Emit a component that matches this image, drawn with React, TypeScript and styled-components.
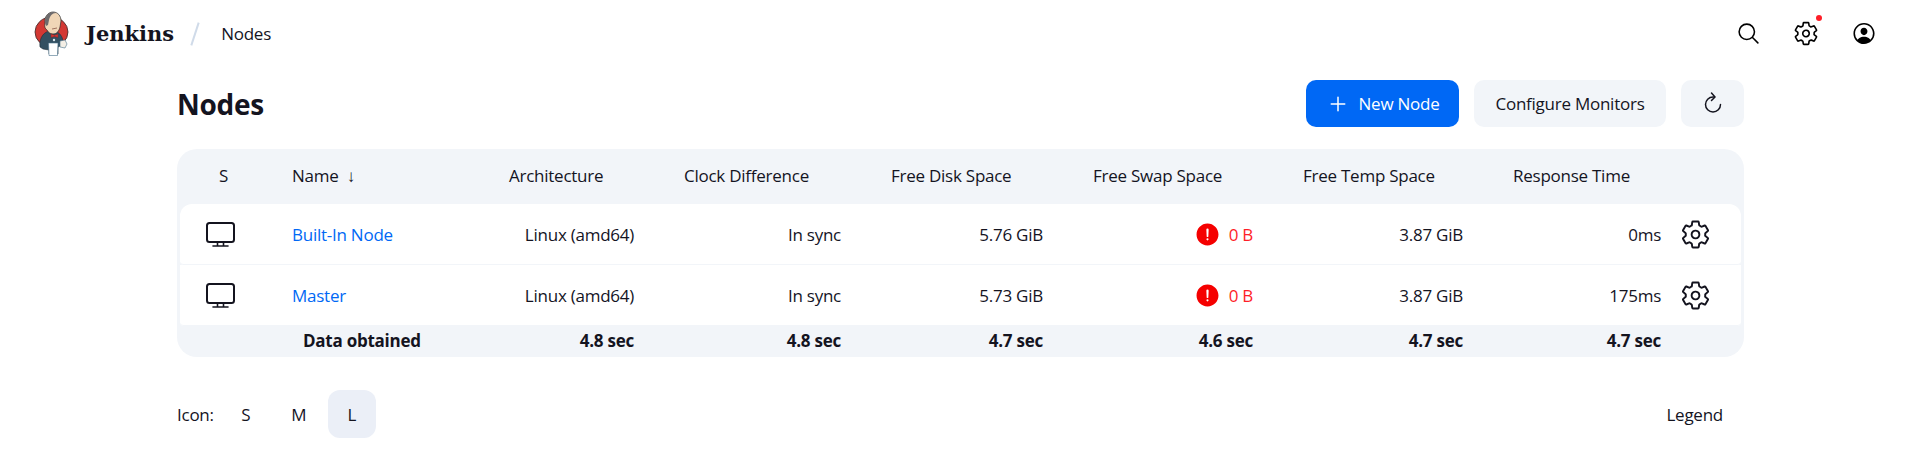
import React from 'react';
import styled, { createGlobalStyle } from 'styled-components';
import {
  IoAdd,
  IoAlertCircle,
  IoPersonCircleOutline,
  IoSearchOutline,
  IoSettingsOutline,
} from 'react-icons/io5';

const GlobalStyle = createGlobalStyle`
  html, body {
    margin: 0;
    padding: 0;
    background: #fff;
    color: #14141f;
    font-family: "Open Sans", "Noto Sans", sans-serif;
    font-size: 17px;
    letter-spacing: -0.25px;
  }
`;

const nodes = [
  { name: 'Built-In Node', arch: 'Linux (amd64)', clock: 'In sync', disk: '5.76 GiB', swap: '0 B', temp: '3.87 GiB', time: '0ms' },
  { name: 'Master', arch: 'Linux (amd64)', clock: 'In sync', disk: '5.73 GiB', swap: '0 B', temp: '3.87 GiB', time: '175ms' },
];

const columns = [87, 217, 175, 207, 202, 210, 210, 193, 60];

const JenkinsLogo = () => (
  <svg width="44" height="50" viewBox="0 0 44 50">
    <ellipse cx="21.5" cy="24" rx="16.5" ry="15" fill="#d33833" stroke="#3a2a2a" strokeWidth="0.8" />
    <path d="M10 39c-1-7 2-14 9-16l8 1c4 2 6 6 6 11l-3 3-2 1 0 7-9 0 0-4-6-1z" fill="#335061" stroke="#1d2c36" strokeWidth="0.6" />
    <path d="M15 15c-1-6 3-11 8-11 5 0 8 4 8 9l-1 6c-1 4-3 7-7 7-3 0-5-2-6-4-2-1-3-4-2-7z" fill="#f0d6b7" stroke="#2a2a2a" strokeWidth="0.7" />
    <path d="M15 15c-1-6 3-11 8-11 1 0 2 0 3 1-4 0-6 3-7 7l-1 5-2 1z" fill="#6d6b6d" />
    <path d="M22 21l5-1" stroke="#8a5a4a" strokeWidth="0.8" fill="none" />
    <path d="M21 26l3.5 1.2L28 26l0 3.4-3.5-1-3.5 1z" fill="#d33833" stroke="#7a1a18" strokeWidth="0.4" />
    <path d="M18.5 35h9.5l-.5 12.5h-8.5z" fill="#fff" stroke="#49728b" strokeWidth="0.6" />
    <path d="M30 33l5-1 2 4-2 4-5-1z" fill="#f4efe6" stroke="#49728b" strokeWidth="0.6" />
    <circle cx="24" cy="32" r="1.2" fill="#d9e5ec" />
  </svg>
);

const ComputerIcon = () => (
  <svg width="29" height="25" viewBox="0 0 29 25" fill="none" stroke="#14141f" strokeLinecap="round" strokeLinejoin="round">
    <rect x="1" y="1" width="27" height="19" rx="2.5" strokeWidth="2" />
    <path d="M7 24h15M11.5 20.5v3.5M17.5 20.5v3.5" strokeWidth="1.6" />
  </svg>
);

const RefreshIcon = () => (
  <svg width="20" height="22" viewBox="0 0 20 22" fill="none" stroke="#14141f" strokeWidth="1.5" strokeLinecap="round" strokeLinejoin="round">
    <path d="M17.5 13.5a7.5 7.5 0 1 1-7.5-7.5h1.5" />
    <path d="M8.5 2l3.5 4-3.5 3.5" />
  </svg>
);

export default function App() {
  return (
    <>
      <GlobalStyle />
      <Header>
        <Brand>
          <JenkinsLogo />
          <BrandName>Jenkins</BrandName>
          <Slash />
          <Crumb>Nodes</Crumb>
        </Brand>
        <HeaderActions>
          <HeaderIcon><IoSearchOutline size={25} /></HeaderIcon>
          <HeaderIcon>
            <IoSettingsOutline size={27} />
            <Dot />
          </HeaderIcon>
          <HeaderIcon><IoPersonCircleOutline size={31} /></HeaderIcon>
        </HeaderActions>
      </Header>
      <Main>
        <TitleRow>
          <Title>Nodes</Title>
          <Buttons>
            <Button $primary>
              <IoAdd size={24} />
              New Node
            </Button>
            <Button>Configure Monitors</Button>
            <Button $square><RefreshIcon /></Button>
          </Buttons>
        </TitleRow>
        <TableWrap>
          <Table>
            <colgroup>
              {columns.map((w, i) => (
                <col key={i} style={{ width: w }} />
              ))}
            </colgroup>
            <thead>
              <tr>
                <HeadCell $center>S</HeadCell>
                <HeadCell>Name&nbsp; ↓</HeadCell>
                <HeadCell>Architecture</HeadCell>
                <HeadCell>Clock Difference</HeadCell>
                <HeadCell>Free Disk Space</HeadCell>
                <HeadCell>Free Swap Space</HeadCell>
                <HeadCell>Free Temp Space</HeadCell>
                <HeadCell>Response Time</HeadCell>
                <HeadCell />
              </tr>
            </thead>
            <tbody>
              {nodes.map((n) => (
                <Row key={n.name}>
                  <IconCell><ComputerIcon /></IconCell>
                  <NameCell><NodeLink href="#">{n.name}</NodeLink></NameCell>
                  <ValueCell>{n.arch}</ValueCell>
                  <ValueCell>{n.clock}</ValueCell>
                  <ValueCell>{n.disk}</ValueCell>
                  <ValueCell $danger>
                    <SwapValue>
                      <IoAlertCircle size={27} />
                      {n.swap}
                    </SwapValue>
                  </ValueCell>
                  <ValueCell>{n.temp}</ValueCell>
                  <LastValueCell>{n.time}</LastValueCell>
                  <GearCell><IoSettingsOutline size={31} /></GearCell>
                </Row>
              ))}
            </tbody>
            <tfoot>
              <tr>
                <FootCell />
                <FootLabel>Data obtained</FootLabel>
                <FootCell>4.8 sec</FootCell>
                <FootCell>4.8 sec</FootCell>
                <FootCell>4.7 sec</FootCell>
                <FootCell>4.6 sec</FootCell>
                <FootCell>4.7 sec</FootCell>
                <FootCell $last>4.7 sec</FootCell>
                <FootCell />
              </tr>
            </tfoot>
          </Table>
        </TableWrap>
        <BottomRow>
          <IconSizes>
            <SizeLabel>Icon:</SizeLabel>
            <SizeOption>S</SizeOption>
            <SizeOption>M</SizeOption>
            <SizeOption $active>L</SizeOption>
          </IconSizes>
          <Legend>Legend</Legend>
        </BottomRow>
      </Main>
    </>
  );
}

const Header = styled.header`
  display: flex;
  align-items: center;
  justify-content: space-between;
  height: 66px;
  padding: 0 42px 0 30px;
`;

const Brand = styled.div`
  display: flex;
  align-items: center;
`;

const BrandName = styled.span`
  margin-left: 12px;
  font-family: "DejaVu Serif", serif;
  font-weight: 700;
  font-size: 21px;
  letter-spacing: 0;
  color: #14141f;
`;

const Slash = styled.span`
  width: 2px;
  height: 24px;
  margin: 2px 25px 0 20px;
  background: #d0dbe9;
  transform: rotate(18deg);
`;

const Crumb = styled.span`
  font-size: 17px;
`;

const HeaderActions = styled.div`
  display: flex;
  align-items: center;
  gap: 32px;
`;

const HeaderIcon = styled.span`
  position: relative;
  display: flex;
  align-items: center;
  justify-content: center;
  width: 26px;
  height: 26px;
  color: #000;
`;

const Dot = styled.span`
  position: absolute;
  top: -5px;
  right: -3px;
  width: 6px;
  height: 6px;
  border-radius: 50%;
  background: #fe1e28;
`;

const Main = styled.main`
  width: 1567px;
  margin-left: 177px;
`;

const TitleRow = styled.div`
  display: flex;
  align-items: center;
  justify-content: space-between;
  height: 47px;
  margin-top: 14px;
`;

const Title = styled.h1`
  margin: 0;
  font-size: 28px;
  font-weight: 700;
  letter-spacing: -0.3px;
`;

const Buttons = styled.div`
  display: flex;
  gap: 15px;
`;

const Button = styled.button<{ $primary?: boolean; $square?: boolean }>`
  display: flex;
  align-items: center;
  justify-content: center;
  gap: 9px;
  height: 47px;
  width: ${(p) => (p.$primary ? '153px' : p.$square ? '63px' : '192px')};
  padding: 0 0 ${(p) => (p.$square ? '4px' : '0')} 0;
  border: 0;
  border-radius: 10px;
  font: inherit;
  font-weight: ${(p) => (p.$primary ? 500 : 400)};
  letter-spacing: inherit;
  color: ${(p) => (p.$primary ? '#fff' : '#14141f')};
  background: ${(p) => (p.$primary ? '#0068f5' : '#f2f5f9')};
`;

const TableWrap = styled.div`
  margin-top: 22px;
  padding: 0 3px;
  border-radius: 20px;
  background: #f2f5f9;
  overflow: hidden;
`;

const Table = styled.table`
  width: 1561px;
  table-layout: fixed;
  border-collapse: separate;
  border-spacing: 0;
`;

const HeadCell = styled.th<{ $center?: boolean }>`
  box-sizing: border-box;
  height: 55px;
  padding: 0 0 2px ${(p) => (p.$center ? '0' : '25px')};
  text-align: ${(p) => (p.$center ? 'center' : 'left')};
  font-weight: 400;
  white-space: nowrap;
`;

const Row = styled.tr`
  background: #fff;

  td {
    border-bottom: 1px solid #f2f5f9;
  }

  &:first-child td:first-child {
    border-top-left-radius: 12px;
  }

  &:first-child td:last-child {
    border-top-right-radius: 12px;
  }

  td:first-child {
    border-bottom-left-radius: 4px;
  }

  td:last-child {
    border-bottom-right-radius: 4px;
  }
`;

const IconCell = styled.td`
  height: 60px;
  padding: 0 6px 0 0;

  svg {
    display: block;
    margin: 0 auto;
  }
`;

const NameCell = styled.td`
  padding-left: 25px;
`;

const NodeLink = styled.a`
  color: #0068f5;
  text-decoration: none;
`;

const ValueCell = styled.td<{ $danger?: boolean }>`
  padding-right: 25px;
  text-align: right;
  white-space: nowrap;
  color: ${(p) => (p.$danger ? '#fe1e28' : 'inherit')};
`;

const LastValueCell = styled(ValueCell)`
  padding-right: 20px;
`;

const SwapValue = styled.span`
  display: inline-flex;
  align-items: center;
  gap: 8px;
  vertical-align: middle;

  svg {
    color: #f50000;
  }
`;

const GearCell = styled.td`
  padding: 0;

  svg {
    display: block;
    margin: 0 0 0 -1px;
  }
`;

const FootCell = styled.td<{ $last?: boolean }>`
  box-sizing: border-box;
  height: 31px;
  padding: 0 ${(p) => (p.$last ? '20px' : '25px')} 2px 0;
  font-weight: 700;
  text-align: right;
  white-space: nowrap;
`;

const FootLabel = styled(FootCell)`
  padding-left: 36px;
  text-align: left;
`;

const BottomRow = styled.div`
  display: flex;
  align-items: center;
  justify-content: space-between;
  margin-top: 33px;
`;

const IconSizes = styled.div`
  display: flex;
  align-items: center;
  gap: 5px;
`;

const SizeLabel = styled.span`
  margin-right: 3px;
`;

const SizeOption = styled.span<{ $active?: boolean }>`
  display: flex;
  align-items: center;
  justify-content: center;
  width: 48px;
  height: 48px;
  border-radius: 12px;
  background: ${(p) => (p.$active ? '#ebeff7' : 'transparent')};
`;

const Legend = styled.span`
  margin-right: 21px;
`;
